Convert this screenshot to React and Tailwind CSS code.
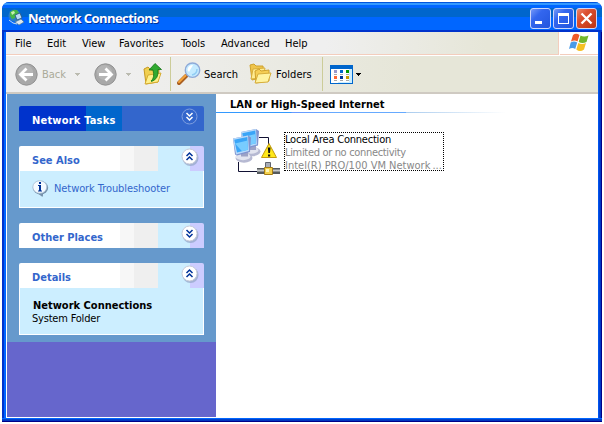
import React from 'react';

const MENU = [
  ['File', 'w-8'],
  ['Edit', 'w-[35px]'],
  ['View', 'w-[37px]'],
  ['Favorites', 'w-[62px]'],
  ['Tools', 'w-10'],
  ['Advanced', 'w-16'],
  ['Help', 'w-10'],
];

function GlobeIcon() {
  return (
    <svg width="17" height="17" viewBox="0 0 17 17">
      <circle cx="6.5" cy="6.5" r="6" fill="#2b7fc4" />
      <path d="M2 3 5 1l4 0 2 3-3 2-1 3-3 1-2-3z" fill="#45b649" />
      <path d="M3 3 6 2 7 4 4 6z" fill="#c9f2b0" />
      <path d="M7 6 12 4 14 9 9 11z" fill="#b9dcf6" stroke="#24527c" strokeWidth=".8" />
      <path d="M7 13 13 10 16 13 11 16z" fill="#dce8ef" stroke="#55788f" strokeWidth=".7" />
      <path d="M1 11 5 14 9 15" stroke="#c3dced" fill="none" />
    </svg>
  );
}

function WinButton({ kind }) {
  return (
    <svg width="21" height="21" viewBox="0 0 21 21">
      <defs>
        <linearGradient id={'wb' + kind} x1="0" y1="0" x2="1" y2="1">
          <stop offset="0" stopColor={kind === 'close' ? '#ee8a70' : '#7a9cf8'} />
          <stop offset=".35" stopColor={kind === 'close' ? '#dc5030' : '#3366ee'} />
          <stop offset="1" stopColor={kind === 'close' ? '#bb3311' : '#2255dd'} />
        </linearGradient>
      </defs>
      <rect x=".5" y=".5" width="20" height="20" rx="2.5" fill={'url(#wb' + kind + ')'} stroke="#ccd6fa" />
      {kind === 'min' && <rect x="5" y="13" width="7" height="3" fill="#fff" />}
      {kind === 'max' && <path d="M5 5h11v11H5zM6 8v7h9V8z" fillRule="evenodd" fill="#fff" />}
      {kind === 'close' && <path d="M5.500 5.500 15.500 15.500M15.500 5.500 5.500 15.500" stroke="#fff" strokeWidth="2.300" />}
    </svg>
  );
}

function WindowsFlag() {
  return (
    <svg width="20" height="19" viewBox="0 0 20 19">
      <path d="M4 2Q7-.5 10.500 2L8.500 8.500Q5.500 6.500 2 8.500z" fill="#ee5a28" />
      <path d="M11.500 2.500Q15 4.500 19.500 2.500L17.500 9Q13.500 11 9.700 9z" fill="#72b62c" />
      <path d="M1.700 9.500Q5 7.500 8.200 9.500L6.200 16Q3.500 14 0 16z" fill="#4a9be8" />
      <path d="M9.300 10Q13 12 17 10L15 16.500Q11 19.500 7.300 16.500z" fill="#f6c023" />
    </svg>
  );
}

function RoundArrow({ forward }) {
  return (
    <svg width="23" height="23" viewBox="0 0 23 23">
      <circle cx="11.500" cy="11.500" r="10.700" fill="#a8a8a8" stroke="#929292" />
      <circle cx="10.500" cy="9.500" r="7.500" fill="#b5b5b5" />
      <path
        d={forward ? 'M5 11.500h12M11.500 5.500l6 6-6 6' : 'M18 11.500H6M11.500 5.500l-6 6 6 6'}
        fill="none"
        stroke="#fff"
        strokeWidth="2.800"
      />
    </svg>
  );
}

function Caret({ color }) {
  return (
    <svg width="5" height="3" viewBox="0 0 5 3" shapeRendering="crispEdges">
      <path d="M0 0h5v1H0zM1 1h3v1H1zM2 2h1v1H2z" fill={color} />
    </svg>
  );
}

function UpFolder() {
  return (
    <svg width="20" height="24" viewBox="0 0 20 24">
      <path d="M1 7 5 5 8 8 16 8 15 20 3 22z" fill="#f1cf50" stroke="#c59a22" />
      <path d="M2 22 5 13 18 11 15 20z" fill="#fff08a" stroke="#d6ac31" />
      <path d="M8 19Q12 16 10 8H6L12 1.500l6.500 6H15Q16 17 8.500 19.500z" fill="#31aa31" stroke="#137513" strokeWidth=".8" />
    </svg>
  );
}

function Magnifier() {
  return (
    <svg width="24" height="24" viewBox="0 0 24 24">
      <path d="M2 21 9 14" stroke="#a95f22" strokeWidth="4" strokeLinecap="round" />
      <path d="M2 20 8.500 13.500" stroke="#f5a43c" strokeWidth="2" strokeLinecap="round" />
      <circle cx="15.500" cy="8.200" r="7.200" fill="#c5ebff" stroke="#8faad8" strokeWidth="1.400" />
      <path d="M10.500 8Q11 3 16 3L12 10z" fill="#fff" />
      <path d="M20 7Q20 12 15 13" fill="none" stroke="#92cdf4" strokeWidth="1.500" />
    </svg>
  );
}

function Folders() {
  return (
    <svg width="23" height="22" viewBox="0 0 23 22">
      <path d="M1 2 5 1 7 3 14 3 15 14 3 17z" fill="#efc44a" stroke="#cfa12c" />
      <path d="M2 16 4 6 16 5 14 15z" fill="#ffec91" stroke="#d7ae3b" />
      <path d="M6 8 10 6 12 8 20 7 20 18 7 20z" fill="#f6cf55" stroke="#cfa12c" />
      <path d="M6 20 9 11 22 10 19 19z" fill="#fff3a0" stroke="#d7ae3b" />
    </svg>
  );
}

function ViewsIcon() {
  return (
    <svg width="23" height="19" viewBox="0 0 23 19" shapeRendering="crispEdges">
      <rect width="23" height="19" fill="#0066cc" />
      <rect x="1" y="4" width="21" height="14" fill="#fff" />
      <path d="M19 4h3v14H8v-1h11z" fill="#cceeff" />
      <rect x="4" y="5" width="3" height="3" fill="#9999cc" />
      <rect x="10" y="5" width="3" height="3" fill="#0066cc" />
      <rect x="16" y="5" width="3" height="3" fill="#009900" />
      <rect x="4" y="11" width="3" height="3" fill="#ff6633" />
      <rect x="10" y="11" width="3" height="3" fill="#003399" />
      <rect x="16" y="11" width="3" height="3" fill="#cc9900" />
      <path d="M4 9.500h3M10 9.500h3M16 9.500h3M4 15.500h3M10 15.500h3M16 15.500h3" stroke="#a8a8a8" />
    </svg>
  );
}

function Chevron({ up, dark }) {
  return (
    <svg width="18" height="18" viewBox="0 0 18 18">
      {!dark && <circle cx="9.500" cy="10" r="8" fill="#99aacc" opacity=".8" />}
      <circle cx="8.500" cy="8.500" r="7.500" fill={dark ? '#3366cc' : '#fff'} stroke={dark ? '#7f9fe0' : '#c6cad8'} />
      <path
        d={up ? 'M5.500 8 8.500 5l3 3M5.500 12 8.500 9l3 3' : 'M5.500 5l3 3 3-3M5.500 9l3 3 3-3'}
        fill="none"
        stroke={dark ? '#fff' : '#003399'}
        strokeWidth="1.500"
      />
    </svg>
  );
}

function InfoIcon() {
  return (
    <svg width="17" height="17" viewBox="0 0 17 17">
      <path d="M8.800 1.200a7.400 6.700 0 0 1 1.700 12.800V17l-4-3A7.400 6.700 0 0 1 8.800 1.200z" fill="#7792ac" />
      <ellipse cx="8.500" cy="7.800" rx="7.700" ry="6.700" fill="#7792ac" />
      <path d="M6 12h5v4.500z" fill="#7792ac" />
      <ellipse cx="7.800" cy="7" rx="7" ry="6.300" fill="#f4faff" stroke="#a5bdd0" strokeWidth=".8" />
      <path d="M7 2h2v2H7zM6 5h3v5.500h1v1H6v-1h1V6H6z" fill="#003399" />
    </svg>
  );
}

function Screen({ x, y }) {
  return (
    <g transform={`translate(${x} ${y})`}>
      <ellipse cx="11" cy="22.500" rx="8.500" ry="4.700" fill="#b6b9d2" />
      <ellipse cx="10" cy="21" rx="7.500" ry="3.700" fill="#e2e4ef" />
      <path d="M8 16h7v5H8z" fill="#9ca2c6" />
      <path d="M0 3 15 0 18 2 17 16.500 4 20 2 19z" fill="#7f93cf" />
      <path d="M0 3 15 0 16 15.500 3 19z" fill="#b8dafa" />
      <path d="M1.200 4.200 14.300 1.600 15 14.200 4 17z" fill="#3aa5f8" />
      <path d="M2 8 14.600 5 15 14.200 9 15.700z" fill="#78ccff" />
    </g>
  );
}

function LanIcon() {
  return (
    <svg width="48" height="49" viewBox="0 0 48 49">
      <path d="M27 8.500h9.500V16M6.500 33v9.500H25" fill="none" stroke="#111133" />
      <Screen x={9} y={0} />
      <Screen x={1} y={6.500} />
      <path d="M37 14.500 44.500 28.500H29.500z" fill="#ffe81a" stroke="#c39b10" />
      <path d="M35.800 18.500h2.700l-.5 5.500h-1.700zM36 25.500h2.200v2H36z" fill="#111" />
      <path d="M33.500 33.500h5v6h-5z" fill="#a9adb5" stroke="#606570" />
      <path d="M25 39h23v6H25z" fill="#555a5e" />
      <path d="M25 40.500h23v2H25z" fill="#c5c8ca" />
      <path d="M32.500 38.500h8v7h-8z" fill="#f4d24d" stroke="#a67c15" />
      <path d="M34 40h3v3h-3z" fill="#fff6b5" />
    </svg>
  );
}

function PanelHeader({ title, up, dark }) {
  return (
    <div
      className={
        'flex h-[25px] w-[185px] items-center justify-between rounded-t-[2px] pl-[13px] pr-[5px] ' +
        (dark
          ? 'bg-[linear-gradient(to_right,#0033cc_67px,#0066cc_67px,#0066cc_103px,#3366cc_103px)] text-white'
          : 'bg-[linear-gradient(to_right,#fff_101px,#f7f7f7_101px,#f7f7f7_115px,#efefef_115px,#efefef_139px,#cceeff_139px,#cceeff_171px,#ccccff_171px)] text-[#3366cc]')
      }
    >
      <span className={'pt-[4px] text-[11px] font-bold leading-[14px] ' + (dark ? 'tracking-[0.2px]' : '')}>{title}</span>
      <span className="pb-[3px]"><Chevron up={up} dark={dark} /></span>
    </div>
  );
}

export default function App() {
  return (
    <div className="h-[424px] w-[604px] overflow-hidden bg-white pl-[2px] pt-[2px] font-['DejaVu_Sans_Condensed','DejaVu_Sans',sans-serif] text-[11px] leading-[13px] text-black [font-stretch:condensed]">
      <div className="flex h-[420px] w-[600px] flex-col overflow-hidden rounded-t-[7px] bg-[linear-gradient(to_right,#0033cc_2px,#0066ff_2px,#0066ff_4px,#0066ff_596px,#0044dd_597px,#0033bb_599px,#000088_599px)]">
        <div className="flex h-[30px] shrink-0 items-center bg-[linear-gradient(#0055dd_1px,#3399ff_1px,#3399ff_3px,#0066ff_3px,#0066ff_6px,#0066cc_6px,#0066cc_15px,#0066ff_15px,#0066ff_28px,#0033cc_28px)] pl-[6px] pr-[5px]">
          <GlobeIcon />
          <span className="ml-[3px] mt-[3px] w-[131px] whitespace-nowrap font-['Open_Sans',sans-serif] text-[13px] font-bold tracking-[-0.57px] text-white [font-stretch:normal] [text-shadow:1px_1px_#003399]">Network Connections</span>
          <div className="ml-auto mt-[3px] flex gap-[2px]">
            <WinButton kind="min" />
            <WinButton kind="max" />
            <WinButton kind="close" />
          </div>
        </div>

        <div className="ml-1 flex h-[386px] w-[592px] flex-col bg-white">
          <div className="flex h-6 shrink-0">
            <div className="flex h-[23px] w-[553px] items-center border-b border-r border-[#f3cdbd] bg-[linear-gradient(to_right,#efefef_320px,#e6e6d8_480px)] pl-[9px]">
              {MENU.map(([label, width]) => (
                <span key={label} className={width + ' whitespace-nowrap'}>{label}</span>
              ))}
            </div>
            <div className="ml-px flex h-[23px] w-[38px] items-center justify-center border-b border-[#f3cdbd] pb-px">
              <WindowsFlag />
            </div>
          </div>

          <div className="flex h-[38px] shrink-0 items-center border-b-2 border-[#cfcac2] bg-[linear-gradient(to_right,#efefef_120px,#e6e6d8_400px)] pl-[9px]">
            <RoundArrow />
            <span className="ml-1 w-[33px] text-[#aaaa99]">Back</span>
            <Caret color="#bbbbb0" />
            <span className="ml-[14px]"><RoundArrow forward /></span>
            <span className="ml-[9px] flex"><Caret color="#bbbbb0" /></span>
            <span className="ml-[12px]"><UpFolder /></span>
            <span className="ml-[7px] h-[34px] w-px bg-[#cccc99]" />
            <span className="ml-[6px]"><Magnifier /></span>
            <span className="ml-[3px] w-[45px]">Search</span>
            <Folders />
            <span className="ml-[4px] w-[46px]">Folders</span>
            <span className="h-[34px] w-px bg-[#cccc99]" />
            <span className="ml-[7px]"><ViewsIcon /></span>
            <span className="ml-[3px] flex"><Caret color="#000" /></span>
          </div>

          <div className="flex h-[324px]">
            <aside className="ml-px h-[323px] w-[209px] bg-[linear-gradient(#6699cc_248px,#6666cc_248px)] pl-3 pt-3">
              <PanelHeader title="Network Tasks" dark />
              <section className="mt-[15px]">
                <PanelHeader title="See Also" up />
                <div className="flex h-[37px] w-[185px] items-center border border-t-0 border-white bg-[#cceeff] pb-[2px] pl-3 text-[#3366cc]">
                  <InfoIcon />
                  <span className="ml-[5px] whitespace-nowrap tracking-[-0.08px]">Network Troubleshooter</span>
                </div>
              </section>
              <section className="mt-[15px]">
                <PanelHeader title="Other Places" />
              </section>
              <section className="mt-[15px]">
                <PanelHeader title="Details" up />
                <div className="h-[47px] w-[185px] border border-t-0 border-white bg-[#cceeff] pl-[13px] pt-[11px]">
                  <div className="whitespace-nowrap font-bold">Network Connections</div>
                  <div className="-ml-px tracking-[-0.2px]">System Folder</div>
                </div>
              </section>
            </aside>

            <main className="h-[323px] w-[382px] bg-white">
              <h2 className="h-[18px] pl-[14px] pt-[4px] font-bold leading-[13px]">LAN or High-Speed Internet</h2>
              <div className="h-px w-[290px] bg-[linear-gradient(to_right,#3399ff_75px,#6699ff_76px,#66aaff_120px,#66aaff_190px,#aaccee_190px,#fff)]" />
              <div className="flex pl-[16px] pt-[16px]">
                <LanIcon />
                <div className="ml-[4px] mt-[3px] h-[39px] w-[160px] whitespace-nowrap border border-dotted border-black">
                  <div className="tracking-[-0.22px]">Local Area Connection</div>
                  <div className="tracking-[-0.33px] text-[#888]">Limited or no connectivity</div>
                  <div className="text-[#888]">Intel(R) PRO/100 VM Network<span className="ml-[2px]">...</span></div>
                </div>
              </div>
            </main>
          </div>
        </div>
        <div className="h-1 shrink-0 bg-[linear-gradient(#0066ff_1px,#0044cc_1px,#0033bb_3px,#000088_3px)]" />
      </div>
    </div>
  );
}
